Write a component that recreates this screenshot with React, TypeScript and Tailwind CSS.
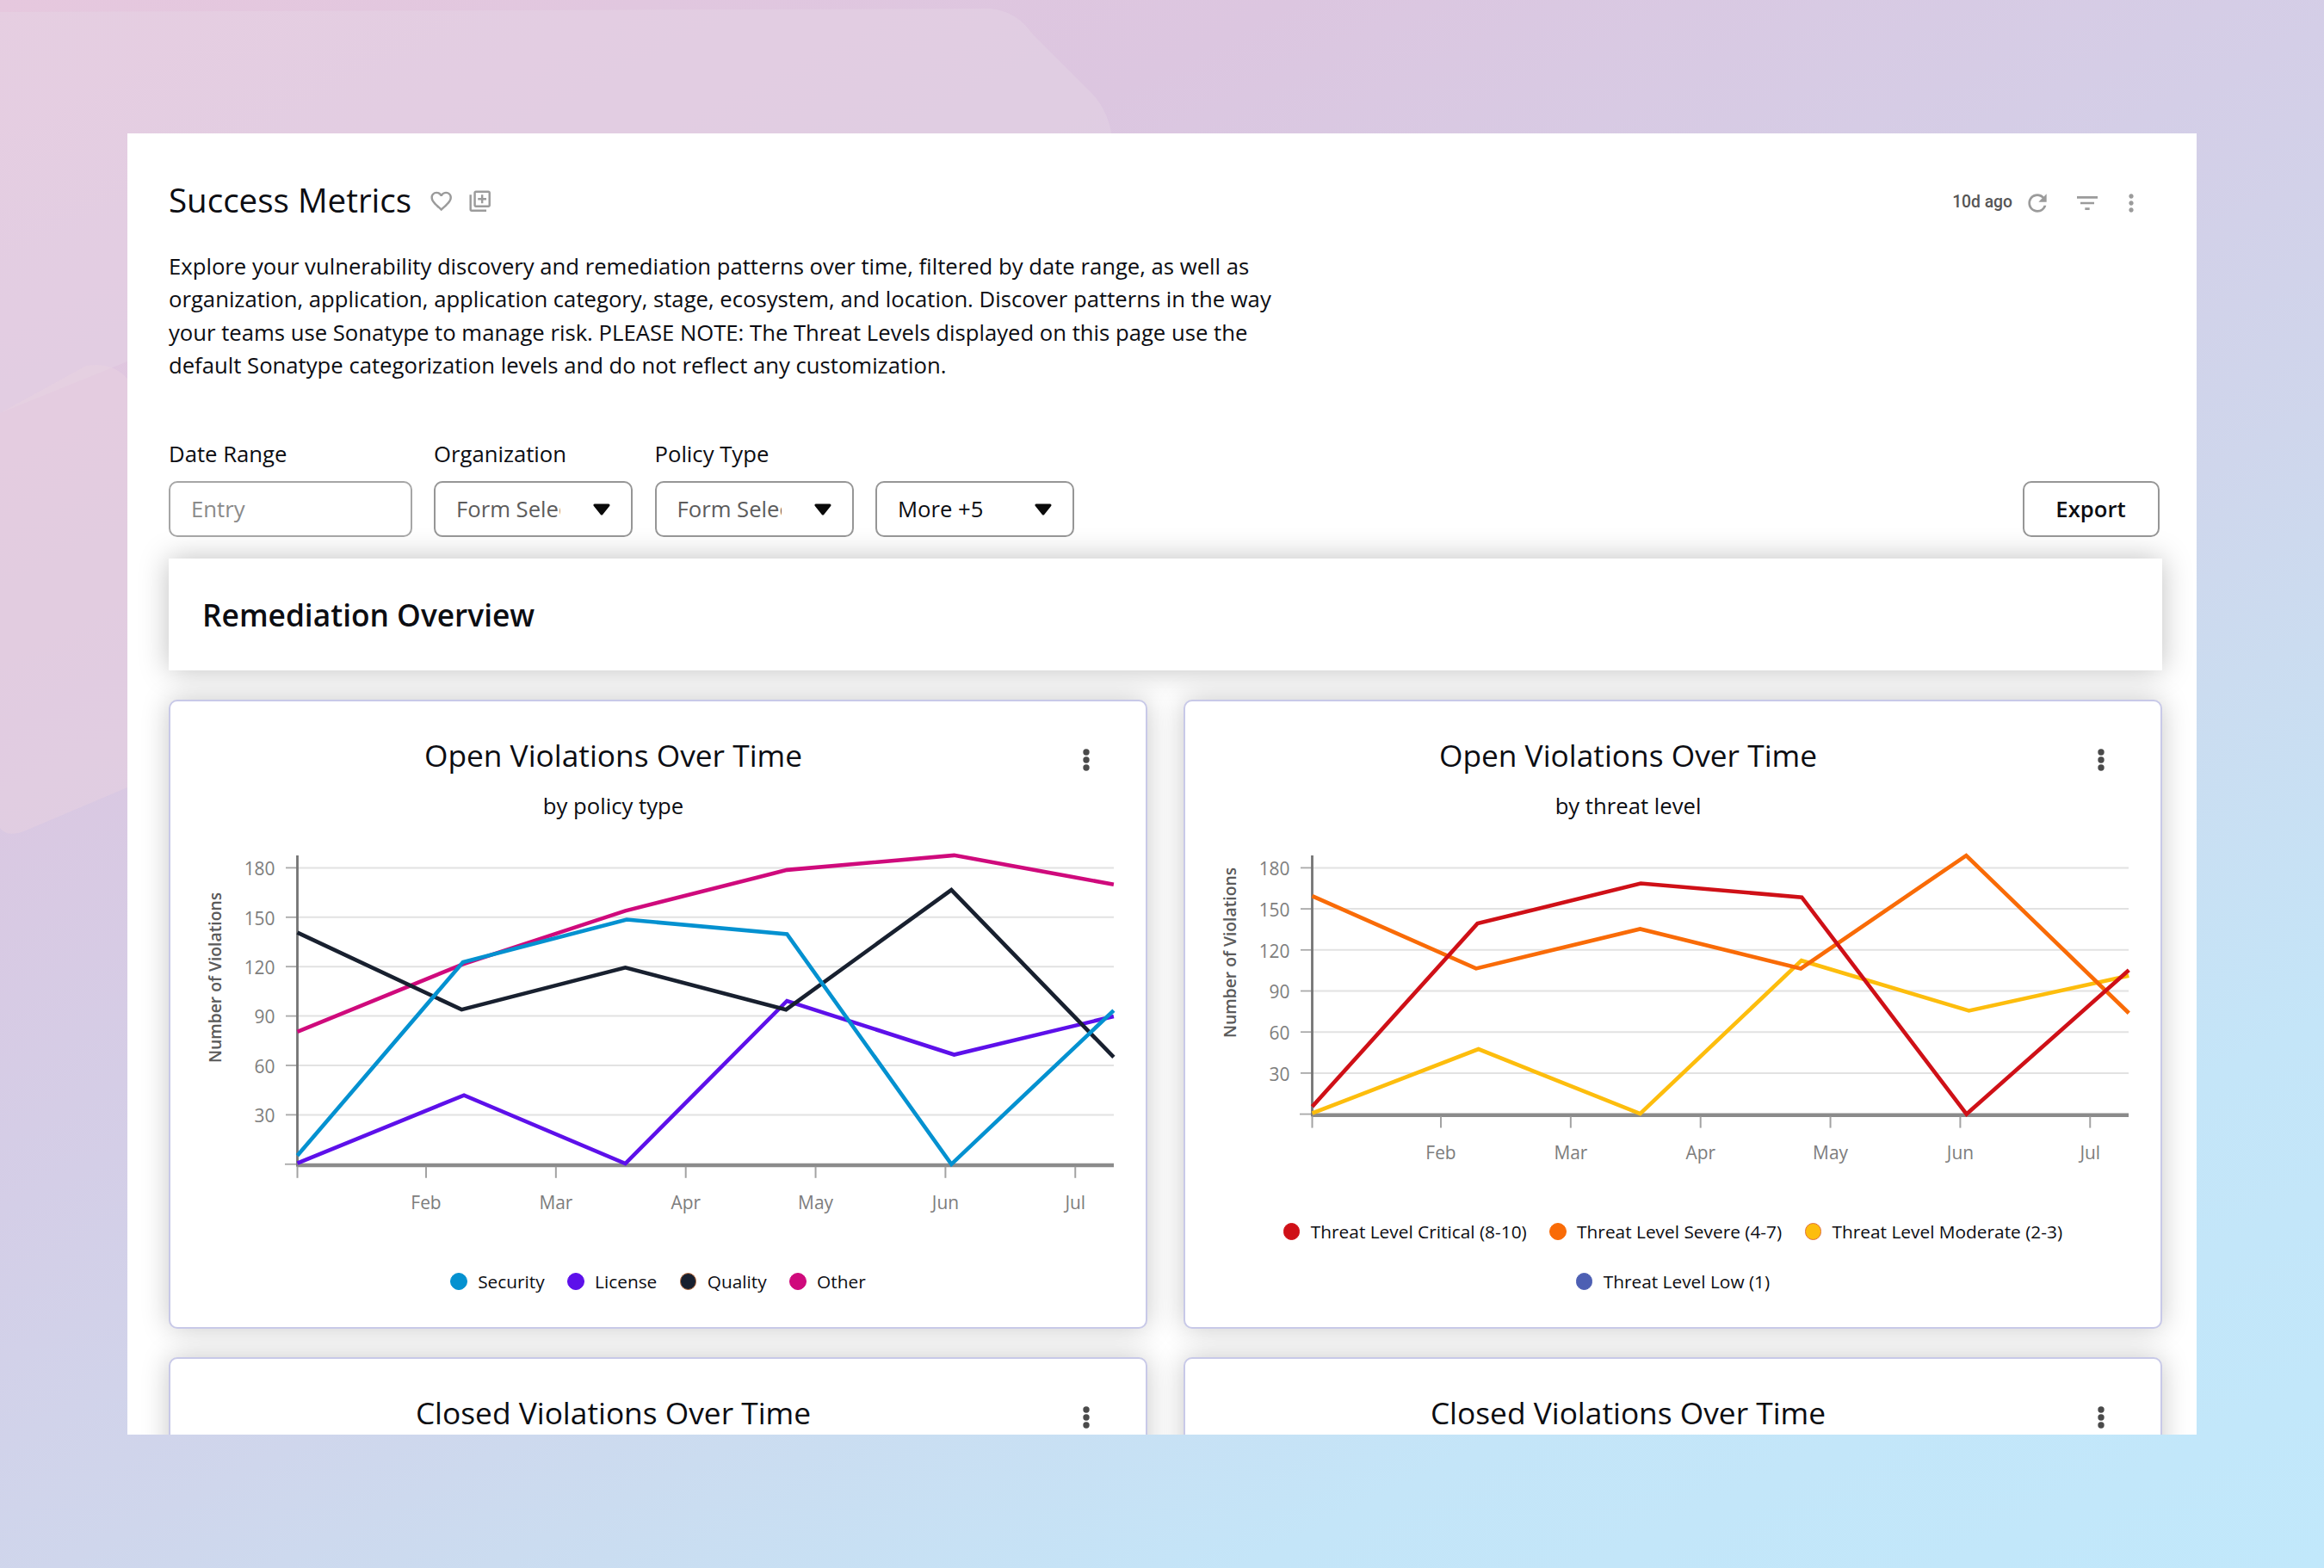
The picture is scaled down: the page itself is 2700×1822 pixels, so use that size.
import { MdFavoriteBorder, MdFilterList, MdMoreVert, MdOutlineLibraryAdd, MdRefresh } from 'react-icons/md';

type Point = [x: number, value: number];

interface Series {
  name: string;
  color: string;
  ring?: string;
  points: Point[];
}

interface ChartConfig {
  subtitle: string;
  height: number;
  // pixels per 30 violations
  step: number;
  labelY: number;
  series: Series[];
  legend: Series[][];
}

const AXIS_X = 147.5;
const TOP_Y = 28.4;
const PLOT_WIDTH = 948.5;
const TICKS = [180, 150, 120, 90, 60, 30];
const MONTHS = ['Feb', 'Mar', 'Apr', 'May', 'Jun', 'Jul'];

const security: Series = { name: 'Security', color: '#0491d0', points: [[0, 5.2], [192.4, 122.7], [382.6, 148.6], [568.8, 139.7], [759.8, 0], [948.4, 93.4]] };
const license: Series = { name: 'License', color: '#5d10ea', points: [[0, 0.6], [193.6, 41.9], [381, 0.4], [568.8, 99.2], [763, 66.5], [948.4, 89.8]] };
const quality: Series = { name: 'Quality', color: '#18202f', ring: '#b5693c', points: [[0, 140.7], [190.8, 93.9], [381, 119.4], [567.7, 93.9], [759.8, 166.6], [948.4, 65]] };
const other: Series = { name: 'Other', color: '#cf0a7c', points: [[0, 80.5], [192.4, 121.5], [381, 153.9], [568.8, 178.7], [763, 187.6], [948.4, 169.9]] };

const critical: Series = { name: 'Threat Level Critical (8-10)', color: '#cf1017', points: [[0, 5.5], [192, 139.3], [381.7, 168.6], [568.8, 158.5], [760.2, 0], [948.8, 105.2]] };
const severe: Series = { name: 'Threat Level Severe (4-7)', color: '#f96b07', points: [[0, 159.4], [190.4, 106.4], [381, 135.3], [567.7, 106.4], [759.8, 189], [948.8, 73.8]] };
const moderate: Series = { name: 'Threat Level Moderate (2-3)', color: '#fdbd0d', ring: '#e0703c', points: [[0, 0.6], [193.2, 47.5], [381, 0.3], [568.4, 112.2], [763, 75.6], [948.8, 101.2]] };
const low: Series = { name: 'Threat Level Low (1)', color: '#4d5fb3', points: [] };

const policyChart: ChartConfig = {
  subtitle: 'by policy type',
  height: 440,
  step: 57.4,
  labelY: 156,
  series: [other, license, quality, security],
  legend: [[security, license, quality, other]],
};

const threatChart: ChartConfig = {
  subtitle: 'by threat level',
  height: 380,
  step: 47.7,
  labelY: 127,
  series: [moderate, severe, critical],
  legend: [[critical, severe, moderate], [low]],
};

function LineChart({ height, step, labelY, series }: ChartConfig) {
  const zeroY = TOP_Y + step * 6;
  const toY = (value: number) => zeroY - (value / 30) * step;
  const right = AXIS_X + PLOT_WIDTH;

  return (
    <svg width={1132} height={height} viewBox={`0 0 1132 ${height}`} className="shrink-0">
      {TICKS.map((tick) => (
        <g key={tick}>
          <line x1={AXIS_X} x2={right} y1={toY(tick)} y2={toY(tick)} stroke="#e2e2e2" strokeWidth={2} />
          <line x1={134} x2={AXIS_X} y1={toY(tick)} y2={toY(tick)} stroke="#a9a9a9" strokeWidth={1.8} />
          <text x={121.5} y={toY(tick) + 8.8} textAnchor="end" className="fill-[#7d7d7d] text-[20.9px]">{tick}</text>
        </g>
      ))}
      <line x1={133} x2={AXIS_X} y1={zeroY} y2={zeroY} stroke="#a9a9a9" strokeWidth={1.8} />
      <line x1={AXIS_X} x2={AXIS_X} y1={14} y2={zeroY + 3} stroke="#747474" strokeWidth={2.8} />
      <line x1={AXIS_X} x2={right} y1={zeroY + 1.2} y2={zeroY + 1.2} stroke="#8b8b8b" strokeWidth={4.6} />
      <line x1={AXIS_X} x2={AXIS_X} y1={zeroY + 3} y2={zeroY + 16} stroke="#a3a3a3" strokeWidth={2} />
      {MONTHS.map((month, i) => {
        const x = AXIS_X + 149.5 + i * 150.85;
        return (
          <g key={month}>
            <line x1={x} x2={x} y1={zeroY + 3} y2={zeroY + 16} stroke="#a3a3a3" strokeWidth={2} />
            <text x={x} y={zeroY + 52} textAnchor="middle" className="fill-[#7d7d7d] text-[20.9px]">{month}</text>
          </g>
        );
      })}
      <text transform={`translate(58.5 ${labelY}) rotate(-90)`} textAnchor="middle" className="fill-[#5a5a5a] text-[19.3px] font-semibold">
        Number of Violations
      </text>
      {series.map(({ name, color, points }) => (
        <polyline
          key={name}
          points={points.map(([x, value]) => `${AXIS_X + x},${toY(value)}`).join(' ')}
          fill="none"
          stroke={color}
          strokeWidth={4.6}
        />
      ))}
    </svg>
  );
}

function CardHeader({ title }: { title: string }) {
  return (
    <div className="flex items-start">
      <h3 className="w-[1029px] text-center text-[35.3px] leading-[47px]">{title}</h3>
      <svg width={8} height={26} viewBox="0 0 8 26" className="mt-4 ml-[31px] fill-[#4a4a4a]">
        <circle cx={4} cy={4} r={3.7} />
        <circle cx={4} cy={13} r={3.7} />
        <circle cx={4} cy={22} r={3.7} />
      </svg>
    </div>
  );
}

const cardClass = 'w-[1137px] shrink-0 rounded-[10px] border-2 border-[#c8c9e8] bg-white pt-[39px] shadow-[0_0_32px_rgba(0,0,0,0.22)]';

function ChartCard({ chart }: { chart: ChartConfig }) {
  return (
    <section className={`${cardClass} flex h-[731px] flex-col`}>
      <CardHeader title="Open Violations Over Time" />
      <p className="mt-[17px] w-[1029px] text-center leading-[38.6px]">{chart.subtitle}</p>
      <div className="mt-[23px]">
        <LineChart {...chart} />
      </div>
      <div className="mt-auto flex flex-col gap-[26px] pb-[37px]">
        {chart.legend.map((row, i) => (
          <ul key={i} className="flex justify-center gap-[26.5px]">
            {row.map(({ name, color, ring }) => (
              <li key={name} className="flex items-center gap-[12.5px] text-[20.85px] leading-8">
                <span className="size-[19.4px] rounded-full border" style={{ backgroundColor: color, borderColor: ring ?? color }} />
                {name}
              </li>
            ))}
          </ul>
        ))}
      </div>
    </section>
  );
}

function Select({ label, value, muted }: { label?: string; value: string; muted?: boolean }) {
  return (
    <div className="flex flex-col justify-end">
      {label && <span className="mb-3 leading-[38.6px]">{label}</span>}
      <button className="flex h-[65px] w-[231px] items-center justify-between rounded-[10px] border-2 border-[#969696] bg-white pr-6 pl-6">
        <span className={`w-[121px] shrink-0 overflow-hidden pt-px text-left whitespace-nowrap ${muted ? 'text-[#5c5c5c]' : ''}`}>{value}</span>
        <svg width={20} height={14} viewBox="0 0 20 14" className="mt-px">
          <path d="M2 2 H18 L10 12 Z" fill="#0a0a0a" stroke="#0a0a0a" strokeWidth={3} strokeLinejoin="round" />
        </svg>
      </button>
    </div>
  );
}

function Backdrop() {
  return (
    <svg width={2700} height={1822} viewBox="0 0 2700 1822" className="absolute inset-0">
      <path d="M0 14 L1150 10 Q1180 12 1200 40 L1270 110 Q1288 130 1292 160 L148 160 L148 420 L0 480 Z" fill="#e6d6e6" fillOpacity={0.4} />
      <path d="M0 480 L100 425 Q130 420 148 440 L148 915 L30 965 Q8 974 0 962 Z" fill="#ecd4e2" fillOpacity={0.4} />
    </svg>
  );
}

export default function App() {
  return (
    <main className="relative h-[1822px] w-[2700px] overflow-hidden bg-[linear-gradient(153deg,#e6c8de_0%,#dcc6e0_24%,#d4cee7_44%,#cfd6ec_58%,#cbdcf0_66%,#c4e5f8_80%,#c1e8fb_100%)] pt-[155px] pl-[148px] font-['Open_Sans',sans-serif] text-[25.68px] text-[#0c0d12]">
      <Backdrop />
      <div className="relative h-[1512px] w-[2404px] overflow-hidden bg-white pt-[51px] pr-10 pl-12">
        <header className="flex h-[52px] items-center">
          <h1 className="text-[38.5px] leading-[52px]">Success Metrics</h1>
          <MdFavoriteBorder className="mt-[3px] ml-[20px] size-[29.4px] text-[#9b9b9b]" />
          <MdOutlineLibraryAdd className="mt-[3px] ml-[15.5px] size-[29.4px] text-[#9b9b9b]" />
          <div className="ml-auto flex items-center pt-[7px] text-[#9b9b9b]">
            <span className="font-[Roboto,sans-serif] text-[19.3px] font-medium text-[#555555]">10d ago</span>
            <MdRefresh className="ml-[13px] size-8" />
            <MdFilterList className="ml-[26px] size-8" />
            <MdMoreVert className="mr-5 ml-[19px] size-8" />
          </div>
        </header>

        <p className="mt-[32.5px] w-[1300px] leading-[38.6px]">
          Explore your vulnerability discovery and remediation patterns over time, filtered by date range, as well as
          organization, application, application category, stage, ecosystem, and location. Discover patterns in the way
          your teams use Sonatype to manage risk. PLEASE NOTE: The Threat Levels displayed on this page use the
          default Sonatype categorization levels and do not reflect any customization.
        </p>

        <div className="mt-16 flex items-end gap-[25.5px]">
          <div className="flex flex-col">
            <span className="mb-[11.5px] leading-[38.6px]">Date Range</span>
            <div className="flex h-[65px] w-[282.5px] items-center rounded-[10px] border-2 border-[#a6a6a6] bg-white pt-px pl-[24px] text-[#8a8a8a]">Entry</div>
          </div>
          <Select label="Organization" value="Form Select" muted />
          <Select label="Policy Type" value="Form Select" muted />
          <Select value="More +5" />
          <button className="mr-[3.5px] ml-auto h-[65px] w-[159px] rounded-[10px] border-2 border-[#969696] bg-white pt-px font-semibold">Export</button>
        </div>

        <div className="mt-[25px] flex h-[130px] items-center bg-white pl-[39px] shadow-[0_0_32px_rgba(0,0,0,0.25)]">
          <h2 className="text-[35.3px] leading-[48px] font-semibold">Remediation Overview</h2>
        </div>

        <div className="mt-[33.5px] flex justify-between">
          <ChartCard chart={policyChart} />
          <ChartCard chart={threatChart} />
        </div>
        <div className="mt-[33px] flex justify-between">
          <section className={`${cardClass} h-[731px]`}>
            <CardHeader title="Closed Violations Over Time" />
          </section>
          <section className={`${cardClass} h-[731px]`}>
            <CardHeader title="Closed Violations Over Time" />
          </section>
        </div>
      </div>
    </main>
  );
}
